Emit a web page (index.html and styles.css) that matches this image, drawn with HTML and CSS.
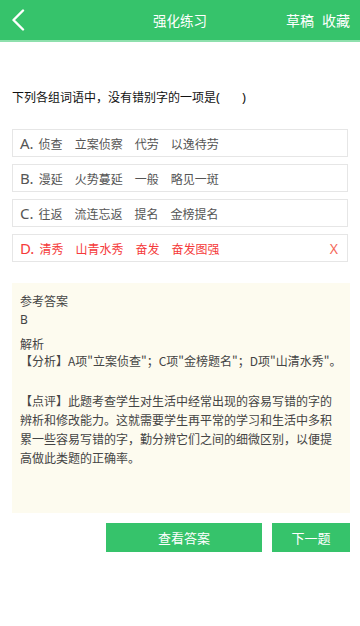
FILE: index.html
```html
<!DOCTYPE html>
<html lang="zh">
<head>
<meta charset="utf-8">
<link rel="stylesheet" href="styles.css">
</head>
<body>
<div class="header">
  <div class="back">
    <svg width="14" height="22" viewBox="0 0 14 22"><path d="M12 1.5 L2.5 11 L12 20.5" fill="none" stroke="#ffffff" stroke-width="2.4" stroke-linecap="round" stroke-linejoin="round"/></svg>
  </div>
  <div class="title">强化练习</div>
  <div class="actions"><span>草稿</span><span>收藏</span></div>
</div>
<div class="question">下列各组词语中，没有错别字的一项是<span class="paren">(</span><span class="blank"></span><span class="paren">)</span></div>
<div class="options">
  <div class="option"><span class="letter">A.</span><span class="w">侦查</span><span class="w">立案侦察</span><span class="w">代劳</span><span class="w">以逸待劳</span></div>
  <div class="option"><span class="letter">B.</span><span class="w">漫延</span><span class="w">火势蔓延</span><span class="w">一般</span><span class="w">略见一斑</span></div>
  <div class="option"><span class="letter">C.</span><span class="w">往返</span><span class="w">流连忘返</span><span class="w">提名</span><span class="w">金榜提名</span></div>
  <div class="option wrong"><span class="letter">D.</span><span class="w">清秀</span><span class="w">山青水秀</span><span class="w">奋发</span><span class="w">奋发图强</span><span class="mark">X</span></div>
</div>
<div class="answer">
  <div class="label">参考答案</div>
  <div class="value">B</div>
  <div class="label sub">解析</div>
  <div class="analysis">【分析】A项"立案侦查"；C项"金榜题名"；D项"山清水秀"。</div>
  <div class="analysis gap">【点评】此题考查学生对生活中经常出现的容易写错的字的辨析和修改能力。这就需要学生再平常的学习和生活中多积累一些容易写错的字，勤分辨它们之间的细微区别，以便提高做此类题的正确率。</div>
</div>
<div class="buttons">
  <div class="btn wide">查看答案</div>
  <div class="btn narrow">下一题</div>
</div>
</body>
</html>
```
FILE: styles.css
```css
* { box-sizing: border-box; }
body {
  margin: 0;
  width: 360px;
  height: 626px;
  background: #ffffff;
  font-family: "Noto Sans CJK SC", "Noto Sans", sans-serif;
  overflow: hidden;
}
.header {
  height: 42px;
  background: #36c36b;
  border-bottom: 2px solid #8ee0ad;
  display: flex;
  align-items: center;
  position: relative;
  color: #ffffff;
}
.back {
  width: 40px;
  padding-left: 11px;
  display: flex;
  align-items: center;
  height: 100%;
}
.title {
  position: absolute;
  left: 0;
  right: 0;
  text-align: center;
  font-size: 13.5px;
  line-height: 40px;
  pointer-events: none;
}
.actions {
  margin-left: auto;
  padding-right: 10px;
  display: flex;
  gap: 8px;
  font-size: 14px;
}
.question {
  margin: 45px 0 0 12px;
  font-size: 12px;
  color: #111;
  line-height: 20px;
  display: flex;
  align-items: center;
}
.paren { font-family: "Noto Sans", sans-serif; font-size: 13px; }
.blank { width: 22px; }
.options {
  margin: 22px 12px 0 12px;
  display: flex;
  flex-direction: column;
  gap: 7px;
}
.option {
  height: 28px;
  border: 1px solid #e6e6e6;
  display: flex;
  align-items: center;
  padding-left: 7px;
  color: #555;
  font-size: 12px;
}
.letter {
  font-size: 15px;
  margin-right: 5px;
  font-family: "Noto Sans", sans-serif;
}
.w { margin-right: 12px; }
.wrong { color: #f53a3a; }
.mark {
  margin-left: auto;
  margin-right: 9px;
  font-size: 14px;
  color: #f56a5a;
  font-family: "Noto Sans", sans-serif;
}
.answer {
  margin: 21px 10px 0 12px;
  height: 230px;
  background: #fdfbef;
  padding: 8px 8px 0 8px;
  color: #444;
  font-size: 12px;
  line-height: 19px;
}
.value { font-family: "Noto Sans", sans-serif; }
.sub { margin-top: 8px; line-height: 14px; }
.analysis { line-height: 19px; }
.gap { margin-top: 21px; }
.buttons {
  margin: 10px 10px 0 0;
  display: flex;
  justify-content: flex-end;
  gap: 10px;
}
.btn {
  height: 29px;
  background: #36c36b;
  color: #ffffff;
  font-size: 13px;
  display: flex;
  align-items: center;
  justify-content: center;
}
.wide { width: 156px; }
.narrow { width: 78px; }
```
